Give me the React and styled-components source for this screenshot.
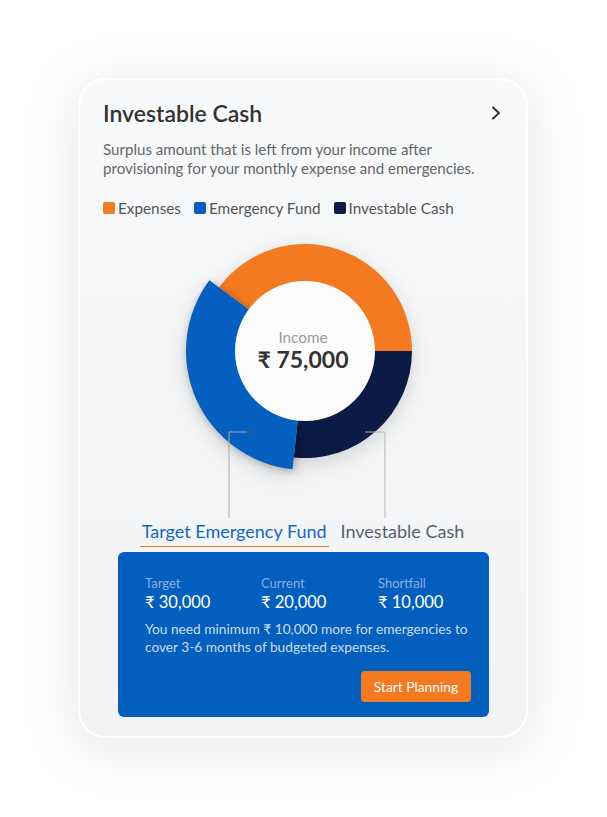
import React from 'react';
import styled, { createGlobalStyle } from 'styled-components';

const Global = createGlobalStyle`
  body { margin: 0; background: #fff; font-family: Lato, "Open Sans", sans-serif; }
`;

const Page = styled.div`
  padding: 78px 0 79px 78px;
`;

const Card = styled.div`
  width: 446px;
  height: 656px;
  box-sizing: content-box;
  border: 2px solid #fff;
  border-radius: 28px;
  background: linear-gradient(180deg, #f8f9fa 0%, #f2f3f5 100%);
  box-shadow: 0 8px 50px 12px rgba(0, 0, 0, 0.07);
  display: flex;
  flex-direction: column;
`;

const Header = styled.div`
  display: flex;
  align-items: center;
  justify-content: space-between;
  padding: 19px 25px 0 23px;
`;

const Title = styled.h1`
  margin: 0;
  font-size: 23px;
  font-weight: 600;
  color: #333;
  line-height: 28px;
`;

const Desc = styled.p`
  margin: 13px 0 0 23px;
  width: 400px;
  font-size: 15.1px;
  line-height: 19px;
  color: #666;
`;

const Legend = styled.div`
  display: flex;
  gap: 13px;
  margin: 21px 0 0 23px;
`;

const LegendItem = styled.div`
  display: flex;
  align-items: center;
  gap: 3px;
  font-size: 15.3px;
  color: #555;
  line-height: 18px;
`;

const Swatch = styled.span`
  width: 12px;
  height: 12px;
  border-radius: 2px;
  background: ${p => p.$c};
`;

const Chart = styled.div`
  position: relative;
  margin-top: 12px;
  height: 289px;
`;

const Center = styled.div`
  position: absolute;
  left: 0;
  right: 0;
  top: 122px;
  transform: translateY(-50%);
  display: flex;
  flex-direction: column;
  align-items: center;
`;

const CenterLabel = styled.span`
  font-size: 15.3px;
  color: #9a9a9a;
  line-height: 17px;
`;

const CenterValue = styled.span`
  font-size: 23px;
  font-weight: 700;
  color: #333;
  line-height: 27px;
`;

const Labels = styled.div`
  display: flex;
  justify-content: center;
  gap: 10px;
`;

const SegLabel = styled.span`
  font-size: 18px;
  line-height: 22px;
  padding: 2px 2px 4px;
  color: ${p => (p.$active ? '#1466c4' : '#5a5f6b')};
  border-bottom: 1.5px solid ${p => (p.$active ? '#f47a22' : 'transparent')};
`;

const Panel = styled.div`
  margin: 5px 37px 0 38px;
  background: #035fbe;
  border-radius: 6px;
  padding: 23px 18px 15px 27px;
  display: flex;
  flex-direction: column;
`;

const Stats = styled.div`
  display: grid;
  grid-template-columns: 116px 117px 1fr;
`;

const Stat = styled.div`
  display: flex;
  flex-direction: column;
`;

const StatLabel = styled.span`
  font-size: 13px;
  line-height: 17px;
  color: #86aee0;
`;

const StatValue = styled.span`
  font-size: 16.5px;
  line-height: 21px;
  color: #fff;
`;

const Note = styled.p`
  margin: 7px 0 0;
  font-size: 13.7px;
  line-height: 17.5px;
  color: #c9dcf5;
`;

const Button = styled.button`
  align-self: flex-end;
  margin-top: 16px;
  height: 31px;
  width: 110px;
  border: none;
  border-radius: 4px;
  background: #f47a22;
  color: #fff;
  font-family: inherit;
  font-size: 13.8px;
`;

const CX = 225;
const CY = 122;

const pt = (r, a) => {
  const rad = (a * Math.PI) / 180;
  return `${(CX + r * Math.cos(rad)).toFixed(2)} ${(CY - r * Math.sin(rad)).toFixed(2)}`;
};

const arc = (ri, ro, a0, a1) => {
  const large = a1 - a0 > 180 ? 1 : 0;
  return `M ${pt(ro, a0)} A ${ro} ${ro} 0 ${large} 0 ${pt(ro, a1)} L ${pt(ri, a1)} A ${ri} ${ri} 0 ${large} 1 ${pt(ri, a0)} Z`;
};

const App = () => (
  <Page>
    <Global />
    <Card>
      <Header>
        <Title>Investable Cash</Title>
        <svg width="10" height="14" viewBox="0 0 10 14">
          <polyline points="2,1.5 8,7 2,12.5" fill="none" stroke="#333" strokeWidth="2" strokeLinecap="round" strokeLinejoin="round" />
        </svg>
      </Header>
      <Desc>Surplus amount that is left from your income after provisioning for your monthly expense and emergencies.</Desc>
      <Legend>
        <LegendItem><Swatch $c="#f47a22" />Expenses</LegendItem>
        <LegendItem><Swatch $c="#0360c0" />Emergency Fund</LegendItem>
        <LegendItem><Swatch $c="#0b1b46" />Investable Cash</LegendItem>
      </Legend>
      <Chart>
        <svg width="450" height="289" viewBox="0 0 450 289">
          <g style={{ filter: 'drop-shadow(0 6px 10px rgba(0,0,0,0.14))' }}>
            <path d={arc(60, 107, 0, 143.5)} fill="#f47a22" />
            <path d={arc(60, 107, 264, 360)} fill="#0b1b46" />
            <path d={arc(60, 119, 143.5, 264)} fill="#0360c0" style={{ filter: 'drop-shadow(2px 2px 4px rgba(0,0,0,0.25))' }} />
          </g>
          <circle cx={CX} cy={CY} r="70" fill="#fcfcfd" />
          <polyline points="167,203 149,203 149,289" fill="none" stroke="#a9a9a9" strokeWidth="1" />
          <circle cx="169.5" cy="203" r="2.3" fill="none" stroke="#555" strokeWidth="1" />
          <polyline points="285,203 305,203 305,289" fill="none" stroke="#b5b5b5" strokeWidth="1" />
        </svg>
        <Center>
          <CenterLabel>Income</CenterLabel>
          <CenterValue>₹ 75,000</CenterValue>
        </Center>
      </Chart>
      <Labels>
        <SegLabel $active>Target Emergency Fund</SegLabel>
        <SegLabel>Investable Cash</SegLabel>
      </Labels>
      <Panel>
        <Stats>
          <Stat><StatLabel>Target</StatLabel><StatValue>₹ 30,000</StatValue></Stat>
          <Stat><StatLabel>Current</StatLabel><StatValue>₹ 20,000</StatValue></Stat>
          <Stat><StatLabel>Shortfall</StatLabel><StatValue>₹ 10,000</StatValue></Stat>
        </Stats>
        <Note>You need minimum ₹ 10,000 more for emergencies to cover 3-6 months of budgeted expenses.</Note>
        <Button>Start Planning</Button>
      </Panel>
    </Card>
  </Page>
);

export default App;
